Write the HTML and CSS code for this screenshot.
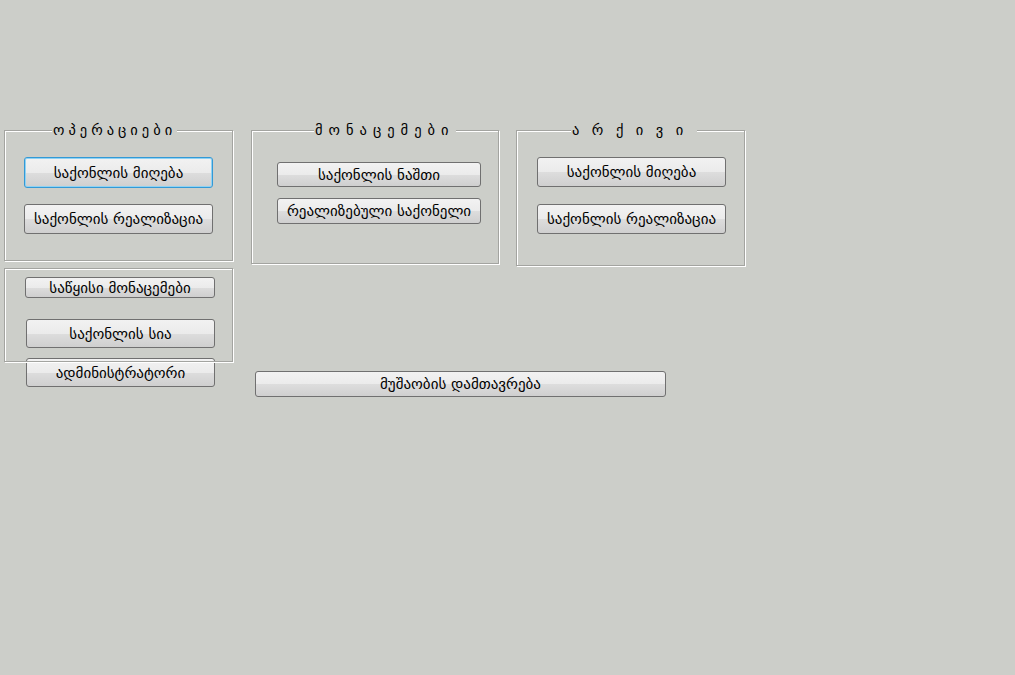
FILE: index.html
```html
<!DOCTYPE html>
<html lang="ka">
<head>
<meta charset="utf-8">
<title>მენიუ</title>
<link rel="stylesheet" href="styles.css">
</head>
<body>
<div class="canvas">
  <div class="col col-1">
    <div class="group g1">
      <span class="legend lg1">ოპერაციები</span>
      <button class="btn focus b-g1a">საქონლის მიღება</button>
      <button class="btn b-g1b">საქონლის რეალიზაცია</button>
    </div>
    <div class="group g2">
      <button class="btn b-g2a">საწყისი მონაცემები</button>
      <button class="btn b-g2b">საქონლის სია</button>
    </div>
    <button class="btn b-admin">ადმინისტრატორი</button>
  </div>
  <div class="col col-2">
    <div class="group g3">
      <span class="legend lg3">მონაცემები</span>
      <button class="btn b-g3a">საქონლის ნაშთი</button>
      <button class="btn b-g3b">რეალიზებული საქონელი</button>
    </div>
    <button class="btn b-exit">მუშაობის დამთავრება</button>
  </div>
  <div class="col col-3">
    <div class="group g4">
      <span class="legend lg4">არქივი</span>
      <button class="btn b-g4a">საქონლის მიღება</button>
      <button class="btn b-g4b">საქონლის რეალიზაცია</button>
    </div>
  </div>
</div>
</body>
</html>
```

FILE: styles.css
```css
html, body {
  margin: 0;
  padding: 0;
  background: #cccec9;
  width: 1015px;
  height: 675px;
  overflow: hidden;
}
body {
  font-family: "DejaVu Sans", sans-serif;
  font-size: 14px;
  color: #000;
}
.canvas {
  display: flex;
  align-items: flex-start;
  padding-top: 130px;
  padding-left: 4px;
}
.col {
  display: flex;
  flex-direction: column;
  align-items: flex-start;
  flex: none;
}
.col-1 { width: 229px; }
.col-2 { width: 248px; margin-left: 18px; }
.col-3 { width: 229px; margin-left: 17px; }

.group {
  position: relative;
  box-sizing: border-box;
  border: 1px solid #a3a4a0;
  box-shadow: 1px 1px 0 #ffffff, inset 1px 1px 0 #ffffff;
  display: flex;
  flex-direction: column;
  align-items: flex-start;
}
.legend {
  position: absolute;
  top: -10px;
  background: #cccec9;
  line-height: 18px;
  padding: 0 1px;
  white-space: nowrap;
  font-size: 14.5px;
}
.lg1 { left: 47px; letter-spacing: 4px; }
.lg3 { left: 62px; letter-spacing: 6px; }
.lg4 { left: 54px; letter-spacing: 12.5px; }

.g1 { width: 229px; height: 131px; padding: 26px 0 0 19px; }
.g2 { width: 229px; height: 94px; margin-top: 7px; padding: 8px 0 0 20px; }
.g3 { width: 248px; height: 134px; padding: 31px 0 0 25px; }
.g4 { width: 229px; height: 136px; padding: 26px 0 0 20px; }

.btn {
  box-sizing: border-box;
  font-family: "DejaVu Sans", sans-serif;
  font-size: 15px;
  color: #000;
  border: 1px solid #707070;
  border-radius: 3px;
  background: linear-gradient(#f2f2f2 0%, #ebebeb 50%, #dddddd 51%, #cfcfcf 100%);
  padding: 0;
  margin: 0;
  white-space: nowrap;
  display: flex;
  align-items: center;
  justify-content: center;
  flex: none;
}
.btn.focus {
  border-color: #3399d6;
  box-shadow: inset 0 0 0 1px #8fd2f3;
}

.b-g1a { width: 189px; height: 31px; }
.b-g1b { width: 189px; height: 30px; margin-top: 16px; }
.b-g2a { width: 190px; height: 21px; }
.b-g2b { width: 189px; height: 29px; margin-top: 21px; margin-left: 1px; }
.b-admin { width: 189px; height: 29px; margin-top: -4px; margin-left: 22px; }
.b-g3a { width: 204px; height: 25px; }
.b-g3b { width: 204px; height: 26px; margin-top: 11px; }
.b-exit { width: 411px; height: 26px; margin-top: 107px; margin-left: 4px; }
.b-g4a { width: 189px; height: 30px; }
.b-g4b { width: 189px; height: 30px; margin-top: 17px; }
```
